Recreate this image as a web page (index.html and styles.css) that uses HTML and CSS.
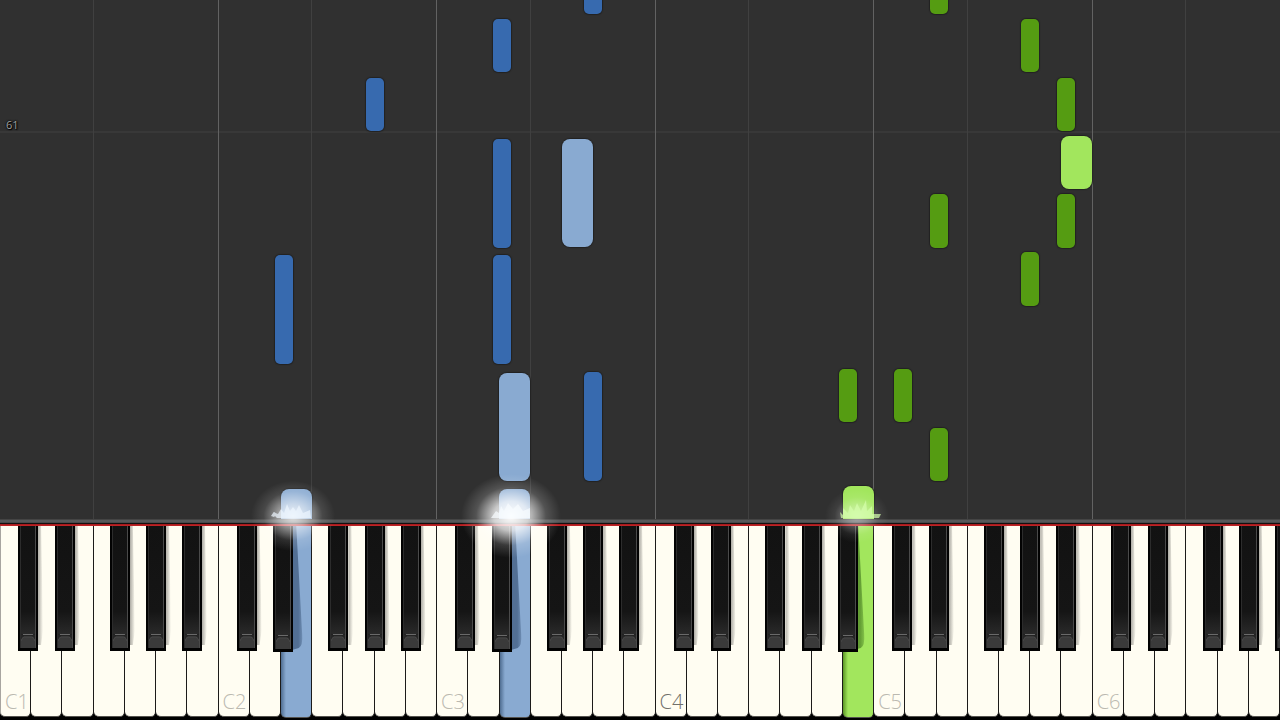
FILE: index.html
```
<!DOCTYPE html>
<html lang="en">
<head>
<meta charset="utf-8">
<meta name="viewport" content="width=device-width, initial-scale=1">
<title>Piano roll</title>
<link rel="stylesheet" href="styles.css">
</head>
<body>
<main class="stage">
  <section class="roll" id="roll" aria-label="Falling notes">
    <div class="measure"><span class="measure-number">61</span></div>
  </section>
  <div class="rail"></div>
  <section class="keyboard" id="keyboard" aria-label="Keyboard"></section>
  <div class="effects" id="effects" aria-hidden="true"></div>
</main>
<script src="piano.js"></script>
</body>
</html>
```
FILE: styles.css
```
* {
  box-sizing: border-box;
}

body {
  margin: 0;
  background: #000;
  font-family: "Open Sans", "Noto Sans", sans-serif;
}

.stage {
  position: relative;
  display: flex;
  flex-direction: column;
  min-height: 100vh;
  overflow: hidden;
}

/* Falling notes */
.roll {
  position: relative;
  flex: 1;
  overflow: hidden;
  background: #303030;
}

.guide {
  position: absolute;
  top: 0;
  bottom: 0;
  width: 1px;
  margin-left: -1px;
  background: #404040;
}

.guide-octave {
  background: #626262;
}

.measure {
  display: flex;
  align-items: flex-end;
  height: 133px;
  padding: 0 6px;
  border-bottom: 2px solid #383838;
}

.measure-number {
  color: #a0a0a0;
  font-size: 11px;
  line-height: 12px;
  text-shadow: 0 0 2px #000, 0 0 2px #000, 1px 1px 1px #000;
}

.note {
  position: absolute;
  border-radius: 5px;
  box-shadow: 0 0 1px 1px #222;
}

.note-natural {
  width: 2.4%;
  border-radius: 8px;
}

.note-sharp {
  width: 1.41%;
}

.left.note-natural { background: #89aad1; }
.left.note-sharp { background: #376aaf; }
.right.note-natural { background: #a2e65d; }
.right.note-sharp { background: #559c12; }

.rail {
  height: 7px;
  background: linear-gradient(#444 0 1px, #555859 1px 3px, #484a4b 3px 4px, #151010 4px 5px, #a81b1e 5px 6px, #bd2325 6px 7px);
}

/* Keys */
.keyboard {
  display: flex;
  height: 194px;
  overflow: hidden;
  background: #000;
}

.slot {
  position: relative;
  flex: 1;
  min-width: 0;
}

.slot:first-child .key-white {
  border-left: 1px solid #a8a5a0;
}

.key {
  display: block;
  margin: 0;
  border: 0;
  font: inherit;
}

.key-white {
  display: flex;
  align-items: flex-end;
  width: 100%;
  height: 191px;
  padding: 0 0 3px 4px;
  border-right: 1px solid #1c1b1a;
  border-bottom: 1px solid #55534f;
  border-radius: 0 0 5px 5px;
  background: #fffdf2;
  color: #bbb9b0;
  font-size: 20px;
  font-weight: 300;
  line-height: 22px;
}

.key-middle {
  color: #716f69;
}

.key-black {
  position: absolute;
  z-index: 1;
  top: 0;
  width: 64%;
  height: 125px;
  padding: 0 2px 3px;
  background: #020202;
}

.key-black::after {
  content: "";
  position: absolute;
  top: 0;
  bottom: 6px;
  left: 100%;
  width: 5px;
  background: linear-gradient(90deg, #66646088, #88868000);
  clip-path: polygon(0 0, 60% 0, 100% 88%, 60% 100%, 0 100%);
}

.after-c { left: 58%; }
.after-d { left: 76%; }
.after-f { left: 52%; }
.after-g { left: 68%; }
.after-a { left: 83%; }

.key-body {
  display: flex;
  align-items: flex-end;
  height: 100%;
  border: 1px solid #4a4a4a;
  border-width: 0 1px 0 1px;
  border-left-color: #2c2c2c;
  background: linear-gradient(#121212 0%, #151515 70%, #292929 88%, #1a1a1a 100%);
}

.key-foot {
  display: block;
  width: 100%;
  height: 15px;
}

.pressed .key-white {
  height: 192px;
}

.pressed-left .key-white {
  background: linear-gradient(90deg, #4f6d91, #89aad1 5px);
}

.pressed-right .key-white {
  background: linear-gradient(90deg, #5b9626, #a2e65d 5px);
}

.key-black-down {
  height: 126px;
}

.key-black-down::after {
  display: none;
}

.cast {
  position: absolute;
  top: 0;
  left: 36%;
  width: 38%;
  height: 126px;
}

/* Light where a note meets the keyboard */
.effects {
  position: absolute;
  right: 0;
  bottom: 160px;
  left: 0;
  z-index: 2;
  height: 120px;
  pointer-events: none;
}

.flare {
  position: absolute;
  bottom: 0;
  width: 120px;
  height: 120px;
  margin-left: -60px;
}
```
FILE: piano.js
```
const WHITE_COUNT = 41;
const LETTERS = ["C", "D", "E", "F", "G", "A", "B"];
const HAS_SHARP = ["C", "D", "F", "G", "A"];
const PRESSED = { 9: "left", 16: "left", 27: "right" };
const SPAN = 1280;

// Notes: hand, kind, start across the span, top, height
const NOTES = [
  ["left", "sharp", 584, -40, 54],
  ["left", "sharp", 493, 19, 53],
  ["left", "sharp", 366, 78, 53],
  ["left", "sharp", 493, 139, 109],
  ["left", "natural", 562, 139, 108],
  ["left", "sharp", 275, 255, 109],
  ["left", "sharp", 493, 255, 109],
  ["left", "natural", 499, 373, 108],
  ["left", "sharp", 584, 372, 109],
  ["left", "natural", 281, 489, 60],
  ["left", "natural", 499, 489, 60],
  ["right", "sharp", 930, -40, 54],
  ["right", "sharp", 1021, 19, 53],
  ["right", "sharp", 1057, 78, 53],
  ["right", "natural", 1061, 136, 53],
  ["right", "sharp", 930, 194, 54],
  ["right", "sharp", 1057, 194, 54],
  ["right", "sharp", 1021, 252, 54],
  ["right", "sharp", 839, 369, 53],
  ["right", "sharp", 894, 369, 53],
  ["right", "sharp", 930, 428, 53],
  ["right", "natural", 843, 486, 60]
];

const roll = document.getElementById("roll");
const keyboard = document.getElementById("keyboard");
const effects = document.getElementById("effects");

function add(parent, tag, className) {
  const el = document.createElement(tag);
  el.className = className;
  parent.append(el);
  return el;
}

for (let i = 1; i < WHITE_COUNT; i++) {
  const letter = LETTERS[i % 7];
  if (letter === "C" || letter === "F") {
    const line = add(roll, "div", letter === "C" ? "guide guide-octave" : "guide");
    line.style.left = (i / WHITE_COUNT) * 100 + "%";
  }
}

for (const [hand, kind, x, top, height] of NOTES) {
  const note = add(roll, "div", `note ${hand} note-${kind}`);
  note.style.left = (x / SPAN) * 100 + "%";
  note.style.top = top + "px";
  note.style.height = height + "px";
}

const FOOT = `<span class="key-body"><svg class="key-foot" viewBox="0 0 14 15" preserveAspectRatio="none">
  <path d="M0 15V7Q1 4 3 3H11Q13 4 14 7V15Z" fill="#3a3a3a"/>
  <path d="M0 1L3 3H11L14 1" fill="none" stroke="#222"/>
  <path d="M2 1.500H12" stroke="#6a6a6a"/>
  <path d="M0 8Q1 5 3 4H11Q13 5 14 8" fill="none" stroke="#474747"/>
</svg></span>`;

for (let i = 0; i < WHITE_COUNT; i++) {
  const letter = LETTERS[i % 7];
  const octave = Math.floor(i / 7) + 1;
  const hand = PRESSED[i];
  const slot = add(keyboard, "div", hand ? `slot pressed pressed-${hand}` : "slot");
  const white = add(slot, "button", "key key-white");
  white.type = "button";
  white.setAttribute("aria-label", letter + octave);
  if (letter === "C") {
    white.textContent = letter + octave;
    if (octave === 4) white.classList.add("key-middle");
  }
  if (hand) {
    const color = hand === "left" ? "#526f94" : "#639d34";
    slot.insertAdjacentHTML("beforeend", `<svg class="cast" viewBox="0 0 14 126" preserveAspectRatio="none">
      <defs><linearGradient id="cast${i}"><stop offset="0" stop-color="${color}"/><stop offset=".6" stop-color="${color}"/><stop offset="1" stop-color="${color}" stop-opacity=".5"/></linearGradient></defs>
      <path d="M0 0H5L12 108Q13 120 8 122L0 124Z" fill="url(#cast${i})"/></svg>`);
  }
  if (HAS_SHARP.includes(letter)) {
    const down = PRESSED[i + 1] ? " key-black-down" : "";
    const black = add(slot, "button", `key key-black after-${letter.toLowerCase()}${down}`);
    black.type = "button";
    black.setAttribute("aria-label", letter + " sharp " + octave);
    black.innerHTML = FOOT;
  }
}

// Flares: centre, glow radius, strength, spark colour, spark outline
const FLARES = [
  [293, 42, 0.85, "#eef6ff", "M44 80L41 77L40 74L45 76L48 71L51 75L54 66L57 73L60 69L63 73L66 67L70 75L77 72L78 80Z M41 79L38 78L40 75L42 74L43 77Z"],
  [511, 50, 1.2, "#f8fcff", "M40 80L45 73L48 75L50 68L53 73L57 65L62 71L67 66L72 73L79 70L79 80Z"],
  [857, 32, 0.5, "#d5ffac", "M44 80L43 74L46 77L46 70L51 75L53 67L57 73L60 65L64 73L69 62L70 73L75 68L75 76L84 76L82 80Z"]
];

FLARES.forEach(([x, radius, strength, color, sparks], i) => {
  const holder = add(effects, "div", "flare");
  holder.style.left = (x / SPAN) * 100 + "%";
  holder.innerHTML = `<svg viewBox="0 0 120 120" width="120" height="120">
    <defs><radialGradient id="flare${i}">
      <stop offset="0" stop-color="#fff" stop-opacity="${Math.min(1, strength)}"/>
      <stop offset=".35" stop-color="#fff" stop-opacity="${Math.min(1, strength * 0.62)}"/>
      <stop offset=".7" stop-color="#fff" stop-opacity="${strength * 0.14}"/>
      <stop offset="1" stop-color="#fff" stop-opacity="0"/>
    </radialGradient></defs>
    <ellipse cx="60" cy="76" rx="${radius}" ry="${radius * 0.84}" fill="url(#flare${i})"/>
    <path d="${sparks}" transform="translate(0 -2)" fill="${color}" opacity=".7"/>
  </svg>`;
});
```
